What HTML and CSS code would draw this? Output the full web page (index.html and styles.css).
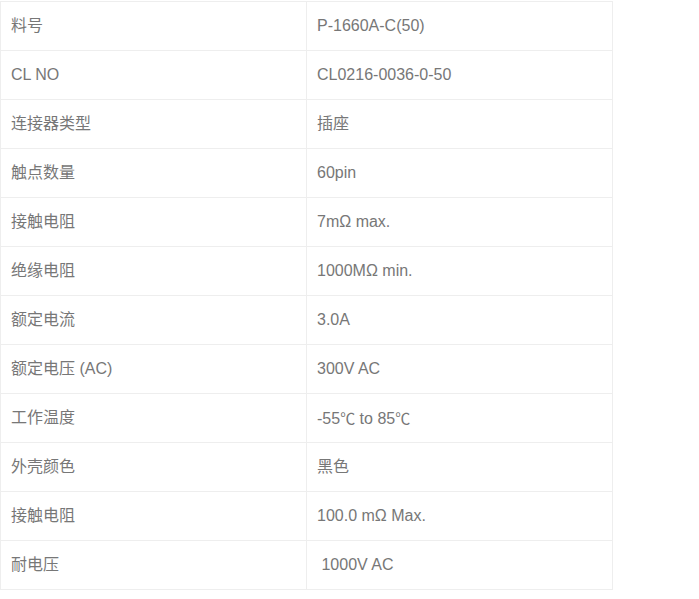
FILE: index.html
```html
<!DOCTYPE html>
<html lang="zh">
<head>
<meta charset="utf-8">
<title>规格参数</title>
<link rel="stylesheet" href="styles.css">
</head>
<body>
<table class="spec">
  <tbody>
    <tr><td class="k">料号</td><td class="v">P-1660A-C(50)</td></tr>
    <tr><td class="k">CL NO</td><td class="v">CL0216-0036-0-50</td></tr>
    <tr><td class="k">连接器类型</td><td class="v">插座</td></tr>
    <tr><td class="k">触点数量</td><td class="v">60pin</td></tr>
    <tr><td class="k">接触电阻</td><td class="v">7mΩ max.</td></tr>
    <tr><td class="k">绝缘电阻</td><td class="v">1000MΩ min.</td></tr>
    <tr><td class="k">额定电流</td><td class="v">3.0A</td></tr>
    <tr><td class="k">额定电压 (AC)</td><td class="v">300V AC</td></tr>
    <tr><td class="k">工作温度</td><td class="v">-55<span class="cjk">℃</span> to 85<span class="cjk">℃</span></td></tr>
    <tr><td class="k">外壳颜色</td><td class="v">黑色</td></tr>
    <tr><td class="k">接触电阻</td><td class="v">100.0 mΩ Max.</td></tr>
    <tr><td class="k">耐电压</td><td class="v">&nbsp;1000V AC</td></tr>
  </tbody>
</table>
</body>
</html>
```
FILE: styles.css
```css
html, body {
  margin: 0;
  padding: 0;
  background: #ffffff;
}
body {
  padding-top: 1px;
  font-family: "Liberation Sans", Arial, "Noto Sans CJK SC", sans-serif;
  font-size: 16px;
  color: #777777;
}
.spec {
  border-collapse: collapse;
  width: 613px;
}
.spec td {
  box-sizing: border-box;
  border: 1px solid #eeeeee;
  height: 49px;
  padding: 0 10px;
  vertical-align: middle;
  line-height: 20px;
}
.spec .k {
  width: 306px;
}
.cjk {
  font-family: "Noto Sans CJK SC", sans-serif;
  font-size: 15px;
}
```
